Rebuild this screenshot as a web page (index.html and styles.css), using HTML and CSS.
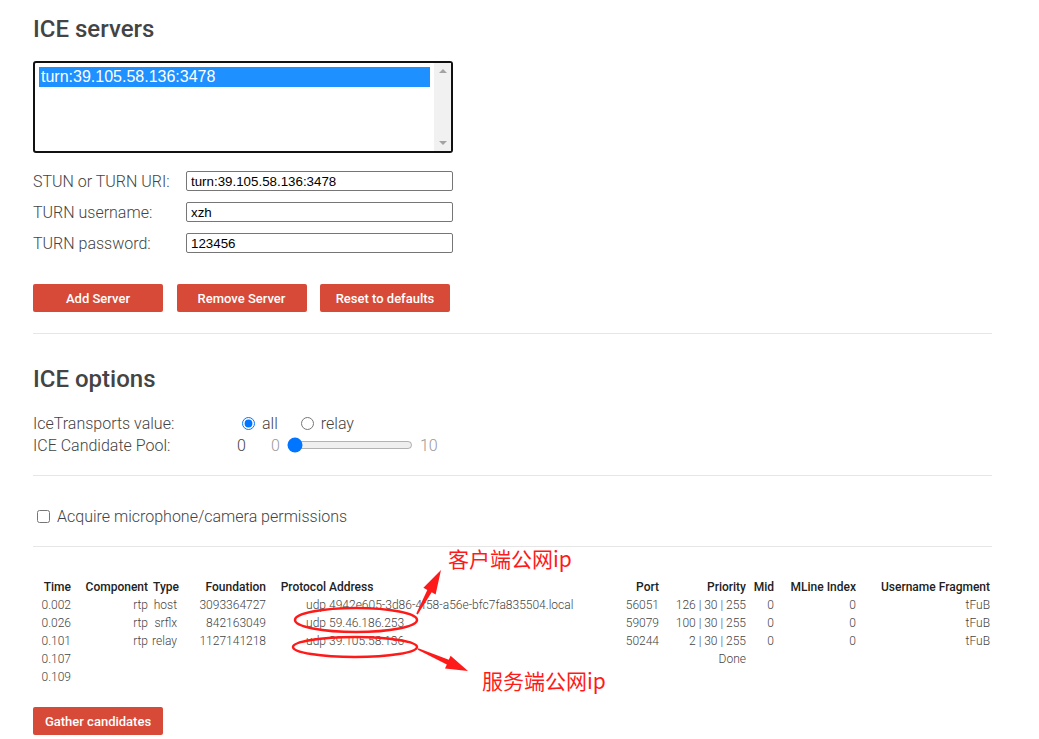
FILE: index.html
```html
<!DOCTYPE html>
<html lang="zh">
<head>
<meta charset="utf-8">
<title>Trickle ICE</title>
<link rel="stylesheet" href="styles.css">
</head>
<body>
<div class="page">
  <section class="servers">
    <h2>ICE servers</h2>
    <div class="listbox">
      <div class="options">
        <div class="option selected">turn:39.105.58.136:3478</div>
      </div>
      <div class="scrollbar"><span class="arrow up"></span><span class="arrow down"></span></div>
    </div>
    <div class="fields">
      <div class="field"><label class="field-label">STUN or TURN URI:</label><input class="text-input" type="text" value="turn:39.105.58.136:3478"></div>
      <div class="field"><label class="field-label">TURN username:</label><input class="text-input" type="text" value="xzh"></div>
      <div class="field"><label class="field-label">TURN password:</label><input class="text-input" type="text" value="123456"></div>
    </div>
    <div class="buttons">
      <button class="btn">Add Server</button>
      <button class="btn">Remove Server</button>
      <button class="btn">Reset to defaults</button>
    </div>
  </section>

  <hr class="rule rule-1">

  <section class="options-section">
    <h2 class="h-options">ICE options</h2>
    <div class="opt-row first">
      <span class="opt-label">IceTransports value:</span>
      <label class="choice"><input type="radio" name="transport" checked>all</label>
      <label class="choice second"><input type="radio" name="transport">relay</label>
    </div>
    <div class="opt-row">
      <span class="opt-label">ICE Candidate Pool:</span>
      <span class="pool-value">0</span>
      <span class="pool-min">0</span>
      <input class="pool-range" type="range" min="0" max="10" value="0">
      <span class="pool-max">10</span>
    </div>
  </section>

  <hr class="rule rule-2">

  <div class="perm-row">
    <input class="perm-check" type="checkbox">
    <span>Acquire microphone/camera permissions</span>
  </div>

  <hr class="rule rule-3">

  <table class="candidates">
    <colgroup>
      <col style="width:38px"><col style="width:77px"><col style="width:31px"><col style="width:87px"><col style="width:60px"><col style="width:274px"><col style="width:59px"><col style="width:87px"><col style="width:28px"><col style="width:82px"><col style="width:136px">
    </colgroup>
    <thead>
      <tr><th>Time</th><th>Component</th><th class="type">Type</th><th>Foundation</th><th>Protocol</th><th class="addr">Address</th><th>Port</th><th>Priority</th><th>Mid</th><th>MLine Index</th><th class="last">Username Fragment</th></tr>
    </thead>
    <tbody>
      <tr><td>0.002</td><td>rtp</td><td class="type">host</td><td>3093364727</td><td>udp</td><td class="addr">4942e605-3d86-4f58-a56e-bfc7fa835504.local</td><td>56051</td><td>126 | 30 | 255</td><td>0</td><td>0</td><td class="last">tFuB</td></tr>
      <tr><td>0.026</td><td>rtp</td><td class="type">srflx</td><td>842163049</td><td>udp</td><td class="addr">59.46.186.253</td><td>59079</td><td>100 | 30 | 255</td><td>0</td><td>0</td><td class="last">tFuB</td></tr>
      <tr><td>0.101</td><td>rtp</td><td class="type">relay</td><td>1127141218</td><td>udp</td><td class="addr">39.105.58.136</td><td>50244</td><td>2 | 30 | 255</td><td>0</td><td>0</td><td class="last">tFuB</td></tr>
      <tr><td>0.107</td><td></td><td class="type"></td><td></td><td></td><td class="addr"></td><td></td><td>Done</td><td></td><td></td><td class="last"></td></tr>
      <tr><td>0.109</td><td></td><td class="type"></td><td></td><td></td><td class="addr"></td><td></td><td></td><td></td><td></td><td class="last"></td></tr>
    </tbody>
  </table>

  <button class="btn gather">Gather candidates</button>

  <svg class="marks" width="1039" height="739" viewBox="0 0 1039 739" aria-hidden="true">
    <ellipse cx="356" cy="620" rx="61" ry="12" fill="none" stroke="#ff1a1a" stroke-width="2.5"/>
    <ellipse cx="355" cy="647" rx="62" ry="10" fill="none" stroke="#ff1a1a" stroke-width="2.5"/>
    <polygon points="416.3,613.6 417.7,614.4 431.7,592.3 435.6,594.5 441,570 423.4,587.7 427.3,589.9" fill="#ff1a1a"/>
    <polygon points="418.3,648.2 417.7,649.8 446.8,664.4 445,668.5 468,671 450.6,655.7 448.8,659.8" fill="#ff1a1a"/>
  </svg>
  <div class="note note-client">客户端公网ip</div>
  <div class="note note-server">服务端公网ip</div>
</div>
</body>
</html>
```

FILE: styles.css
```css
* { box-sizing: border-box; }

html, body {
  margin: 0;
  background: #fff;
}

body {
  font-family: Roboto, "Noto Sans", sans-serif;
  font-weight: 300;
  font-size: 16px;
  color: #444;
}

.page {
  position: relative;
  width: 1039px;
  height: 739px;
  overflow: hidden;
  padding: 15px 47px 0 33px;
}

h2 {
  margin: 0;
  font-size: 24px;
  line-height: 28px;
  font-weight: 500;
  color: #444;
}

/* list box */
.listbox {
  margin-top: 18px;
  width: 420px;
  height: 92px;
  border: 2px solid #111;
  border-radius: 3px;
  display: flex;
}

.options {
  flex: 1;
  padding: 4px 4px 0 4px;
}

.option {
  font-family: "Liberation Sans", Arial, sans-serif;
  font-weight: 400;
  font-size: 16px;
  line-height: 19px;
  height: 20px;
  padding-left: 2px;
}

.option.selected {
  background: #1e90ff;
  color: #fff;
}

.scrollbar {
  width: 17px;
  background: #f1f1f1;
  display: flex;
  flex-direction: column;
  justify-content: space-between;
  align-items: center;
  padding: 6px 0 6px;
}

.arrow {
  width: 0;
  height: 0;
  border-left: 4px solid transparent;
  border-right: 4px solid transparent;
}

.arrow.up { border-bottom: 4px solid #a3a3a3; }
.arrow.down { border-top: 4px solid #a3a3a3; }

/* fields */
.fields {
  margin-top: 18px;
  display: flex;
  flex-direction: column;
  gap: 11px;
}

.field {
  display: flex;
  align-items: center;
  height: 20px;
}

.field-label {
  width: 153px;
}

.text-input {
  width: 267px;
  height: 20px;
  margin: 0;
  border: 1px solid #767676;
  border-radius: 2px;
  padding: 1px 4px;
  font-family: "Liberation Sans", Arial, sans-serif;
  font-size: 13.33px;
  color: #000;
  background: #fff;
}

/* buttons */
.buttons {
  margin-top: 31px;
  display: flex;
  gap: 13.5px;
}

.btn {
  width: 130px;
  height: 28px;
  margin: 0;
  padding: 0;
  border: none;
  border-radius: 2px;
  background: #d84a38;
  color: #fff;
  font-family: Roboto, sans-serif;
  font-weight: 500;
  font-size: 13px;
}

.rule {
  border: 0;
  border-top: 1px solid #e6e6e6;
  height: 0;
  margin: 0;
}

.rule-1 { margin-top: 21px; }
.rule-2 { margin-top: 19px; }
.rule-3 { margin-top: 20px; }

/* options */
.h-options { margin-top: 31px; }

.opt-row {
  display: flex;
  align-items: center;
  height: 22px;
}

.opt-row.first { margin-top: 19px; }

.opt-label { width: 204px; }

.choice {
  display: inline-flex;
  align-items: center;
}

.choice input {
  margin: 0 7px 0 5px;
  width: 13px;
  height: 13px;
}

.choice.second { margin-left: 18px; }

.pool-value { width: 34px; }

.pool-min, .pool-max { color: #999; }

.pool-range {
  margin: 0 7px;
  width: 126px;
}

/* permissions */
.perm-row {
  margin-top: 30px;
  height: 20px;
  display: flex;
  align-items: center;
}

.perm-check {
  margin: 0 7px 0 4px;
  width: 13px;
  height: 13px;
}

/* table */
.candidates {
  margin-top: 31px;
  width: 959px;
  table-layout: fixed;
  border-collapse: collapse;
  font-size: 12px;
}

.candidates th,
.candidates td {
  padding: 0;
  height: 18px;
  line-height: 18px;
  text-align: right;
  white-space: nowrap;
}

.candidates th {
  font-weight: 500;
  color: #222;
}

.candidates td {
  font-weight: 300;
  color: #444;
}

.candidates td.type { padding-right: 2px; }

.candidates .addr {
  text-align: left;
  padding-left: 3px;
  overflow: visible;
}

.candidates .last { padding-right: 2px; }

.gather {
  display: block;
  margin-top: 21px;
}

/* annotations */
.marks {
  position: absolute;
  left: 0;
  top: 0;
  pointer-events: none;
}

.note {
  position: absolute;
  font-family: "Noto Sans CJK SC", sans-serif;
  font-weight: 400;
  font-size: 21px;
  line-height: 24px;
  color: #ff1a1a;
  white-space: nowrap;
}

.note-client { left: 448px; top: 546px; }
.note-server { left: 482px; top: 668px; }
```
